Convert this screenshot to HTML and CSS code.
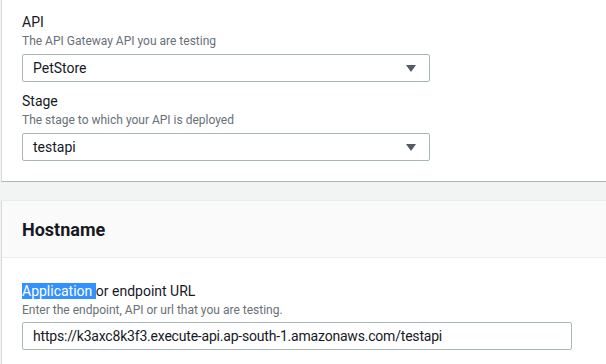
FILE: index.html
```html
<!DOCTYPE html>
<html lang="en">
<head>
  <meta charset="UTF-8" />
  <title>Test setup</title>
  <link rel="stylesheet" href="styles.css">
</head>
<body>
  <div class="card card-top">
    <div class="card-body">
      <div class="field">
        <label class="label">API</label>
        <div class="hint">The API Gateway API you are testing</div>
        <div class="select">
          <span>PetStore</span>
          <svg class="caret" width="10" height="7" viewBox="0 0 10 7"><path d="M0 0h10L5 7z" fill="#545b64"/></svg>
        </div>
      </div>
      <div class="field">
        <label class="label">Stage</label>
        <div class="hint">The stage to which your API is deployed</div>
        <div class="select">
          <span>testapi</span>
          <svg class="caret" width="10" height="7" viewBox="0 0 10 7"><path d="M0 0h10L5 7z" fill="#545b64"/></svg>
        </div>
      </div>
    </div>
  </div>

  <div class="card card-host">
    <div class="card-header">
      <h2>Hostname</h2>
    </div>
    <div class="card-body body-host">
      <div class="field">
        <label class="label"><span class="sel">Application </span>or endpoint URL</label>
        <div class="hint">Enter the endpoint, API or url that you are testing.</div>
        <div class="input">https://k3axc8k3f3.execute-api.ap-south-1.amazonaws.com/testapi</div>
      </div>
    </div>
  </div>
</body>
</html>
```

FILE: styles.css
```css
body {
  margin: 0;
  height: 364px;
  overflow: hidden;
  background: #f2f3f3;
  font-family: Roboto, "Liberation Sans", sans-serif;
  color: #16191f;
}
.card {
  background: #fff;
  margin-left: 1px;
  border-left: 1px solid #d5dbdb;
}
.card-top {
  border-bottom: 1px solid #aab7b8;
}
.card-body {
  padding: 11px 20px 20px 20px;
}
.field + .field {
  margin-top: 8px;
}
.label {
  display: block;
  font-size: 14px;
  line-height: 22px;
}
.hint {
  font-size: 12px;
  line-height: 16px;
  color: #687078;
}
.select {
  margin-top: 5px;
  width: 383px;
  height: 26px;
  border: 1px solid #aab7b8;
  border-radius: 2px;
  display: flex;
  align-items: center;
  justify-content: space-between;
  padding: 0 13px 0 10px;
  font-size: 14px;
}
.card-host {
  margin-top: 18px;
  border-top: 1px solid #eaeded;
}
.card-header {
  height: 56px;
  background: #fafafa;
  border-bottom: 1px solid #eaeded;
  display: flex;
  align-items: center;
  padding: 0 20px;
}
.card-header h2 {
  margin: 0;
  font-size: 18px;
  font-weight: bold;
}
.body-host {
  padding-top: 22px;
}
.sel {
  background: #3390ff;
  color: #fff;
}
.hint + .input {
  margin-top: 4px;
}
.input {
  width: 528px;
  height: 26px;
  line-height: 26px;
  border: 1px solid #aab7b8;
  border-radius: 2px;
  padding: 0 10px;
  font-size: 14px;
  letter-spacing: -0.2px;
}
```
